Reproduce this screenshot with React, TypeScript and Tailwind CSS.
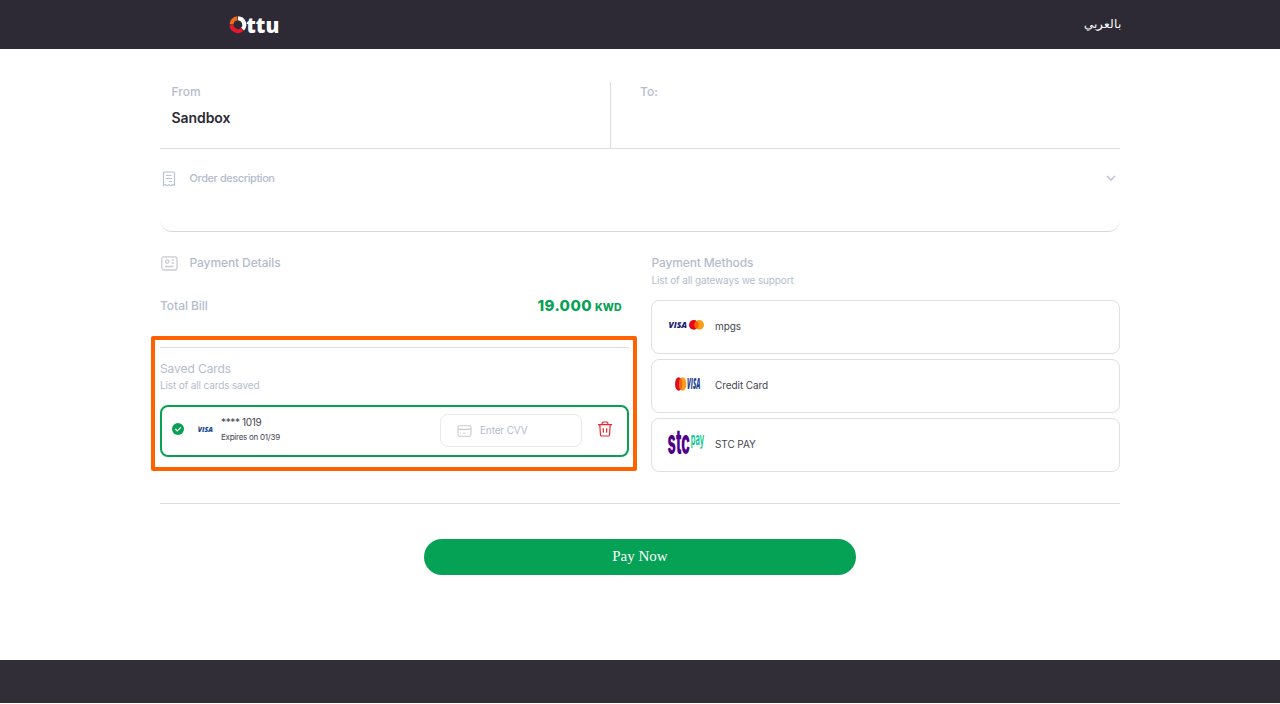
import React from "react";

const muted = "text-[#b5bccd]";

function OttuLogo() {
  return (
    <svg className="overflow-visible" width="51" height="20" viewBox="0 0 51 20" aria-label="Ottu">
      <g fill="none" strokeWidth="4">
        <path d="M9 3.3 A6.5 6.5 0 0 1 13.6 14.2" stroke="#ffffff" />
        <path d="M13.4 14.4 A6.5 6.5 0 0 1 2.5 10.1" stroke="#e8192f" />
        <path d="M2.5 9.4 A6.5 6.5 0 0 1 8.4 3.3" stroke="#f26a1b" />
      </g>
      <text x="17.3" y="17.9" fontFamily="Open Sans, sans-serif" fontWeight="800" fontSize="21" textLength="33" lengthAdjust="spacingAndGlyphs" fill="#ffffff">ttu</text>
    </svg>
  );
}

function ReceiptIcon() {
  return (
    <svg width="14" height="16" viewBox="0 0 14 16" fill="none" stroke="#b9c0d2" strokeWidth="1.2">
      <path d="M1.5 14.6 V2 Q1.5 1 2.5 1 H11.5 Q12.5 1 12.5 2 V14.6 L10.7 13.6 L8.8 14.8 L7 13.6 L5.2 14.8 L3.3 13.6 Z" />
      <path d="M4 4.5 H9.5 M4 7.5 H10 M7 10.5 H10" />
    </svg>
  );
}

function DetailsIcon() {
  return (
    <svg width="17" height="15" viewBox="0 0 17 15" fill="none" stroke="#cbccd1" strokeWidth="1.3">
      <rect x="0.8" y="0.8" width="15.2" height="13.2" rx="2" />
      <circle cx="6.3" cy="5.6" r="1.7" />
      <path d="M10.5 4.2 H13 M10.5 7 H13 M4 10.5 H12.6" />
    </svg>
  );
}

function MpgsLogo() {
  return (
    <svg className="overflow-visible" width="36" height="12" viewBox="0 0 36 12">
      <text x="0.5" y="9.2" fontFamily="Open Sans, sans-serif" fontWeight="800" fontStyle="italic" fontSize="9" textLength="18.5" lengthAdjust="spacingAndGlyphs" fill="#1a1f71">VISA</text>
      <circle cx="25.8" cy="5.9" r="4.8" fill="#eb001b" />
      <circle cx="31.2" cy="5.9" r="4.8" fill="#f79e1b" />
      <path d="M28.5 1.9 A4.8 4.8 0 0 1 28.5 9.9 A4.8 4.8 0 0 1 28.5 1.9" fill="#ff5f00" />
    </svg>
  );
}

function CreditLogo() {
  return (
    <svg className="overflow-visible" width="36" height="16" viewBox="0 0 36 16">
      <ellipse cx="10.6" cy="8" rx="3.6" ry="6.8" fill="#dc1024" />
      <ellipse cx="14.7" cy="8" rx="3.6" ry="6.8" fill="#f79e1b" />
      <ellipse cx="12.7" cy="8" rx="1.6" ry="5.7" fill="#f26312" />
      <text transform="translate(19 13.3) scale(1 2.5)" fontFamily="Open Sans, sans-serif" fontWeight="800" fontStyle="italic" fontSize="6.2" textLength="13.3" lengthAdjust="spacingAndGlyphs" fill="#1f3f8f">VISA</text>
    </svg>
  );
}

function StcLogo() {
  return (
    <svg className="overflow-visible" width="37" height="26" viewBox="0 0 37 26">
      <text transform="translate(-0.4 24.2) scale(1 2.3)" fontFamily="Inter, sans-serif" fontWeight="800" fontSize="14.6" textLength="22.3" lengthAdjust="spacingAndGlyphs" fill="#4f008c">stc</text>
      <text transform="translate(22.8 15.2) scale(1 2.3)" fontFamily="Inter, sans-serif" fontWeight="600" fontSize="7.4" textLength="13.4" lengthAdjust="spacingAndGlyphs" fill="#00c48c">pay</text>
    </svg>
  );
}

function Method({ logo, name }: { logo: React.ReactNode; name: string }) {
  return (
    <div className="flex h-[54px] items-center rounded-lg border border-[#dfdfe1] pb-0.5 pl-4">
      <div className="flex w-[47px] shrink-0 items-center pb-0.5">{logo}</div>
      <span className="text-[10px] leading-4 tracking-[-0.08px] text-[#45454f]">{name}</span>
    </div>
  );
}

export default function App() {
  return (
    <div className="flex h-[704px] flex-col bg-white font-['Inter',sans-serif]">
      <header className="flex h-[49px] shrink-0 items-center justify-between bg-[#2d2a35] pr-[159px] pl-[229px]">
        <OttuLogo />
        <a dir="rtl" className="pb-0.5 font-['Liberation_Serif',serif] text-[12.4px] leading-5 text-white">بالعربي</a>
      </header>

      <main className="mx-auto flex w-[960px] flex-1 flex-col pt-[33px]">
        <section className="flex h-[67px] border-b border-[#dddddf]">
          <div className="w-[451px] border-r border-[#dddddf] pt-0.5 pl-[11.5px]">
            <p className={`${muted} text-xs leading-4 font-medium`}>From</p>
            <p className="mt-2 text-sm leading-5 font-semibold tracking-[-0.08px] text-[#2d2a35]">Sandbox</p>
          </div>
          <p className={`${muted} pt-0.5 pl-[29px] text-xs leading-4 font-medium`}>To:</p>
        </section>

        <section className="flex h-[83px] items-start rounded-b-xl border-b border-[#d9d9dc] pt-[21px] pr-1">
          <div className="flex w-[29.5px] pt-px pl-0.5"><ReceiptIcon /></div>
          <p className={`${muted} text-[11px] leading-4 font-medium tracking-[-0.42px]`}>Order description</p>
          <svg className="mt-1 ml-auto" width="10" height="8" viewBox="0 0 10 8" fill="none" stroke="#c3c7d8" strokeWidth="1.6"><path d="M1 2 L5 6 L9 2" /></svg>
        </section>

        <section className="flex h-[272px] gap-[22px] border-b border-[#dddddf]">
          <div className="flex w-[469px] flex-col pt-[23px]">
            <div className="flex h-4 items-center">
              <div className="w-[29.5px] pl-px"><DetailsIcon /></div>
              <h2 className={`${muted} text-xs leading-4 font-medium tracking-[-0.1px]`}>Payment Details</h2>
            </div>
            <div className="mt-[25px] flex h-5 items-center justify-between pr-[7.5px]">
              <span className={`${muted} text-xs font-medium tracking-[-0.05px]`}>Total Bill</span>
              <span className="flex items-baseline gap-[3px] font-extrabold text-[#08a154]"><span className="text-[15px] leading-5 tracking-[0.42px]">19.000</span><span className="text-[10.5px]">KWD</span></span>
            </div>
            <div className="relative mt-[31px] border-t border-[#dddddf] pt-[13px]">
              <div className="pointer-events-none absolute -top-3 -left-[9px] h-[135px] w-[486px] rounded-xs border-4 border-[#ff6000]" />
              <h2 className={`${muted} text-xs leading-4 tracking-[-0.08px]`}>Saved Cards</h2>
              <p className={`${muted} text-[10px] leading-4 tracking-[-0.14px]`}>List of all cards saved</p>
              <div className="mt-3 flex h-[52px] items-center rounded-lg border-2 border-[#08a154] pr-[15px] pl-2.5">
                <svg className="mb-1" width="12" height="12" viewBox="0 0 12 12"><circle cx="6" cy="6" r="6" fill="#08a154" /><path d="M3.2 6 L5.3 8 L8.9 4.4" fill="none" stroke="white" strokeWidth="1.2" /></svg>
                <svg className="mb-1 ml-[13px] overflow-visible" width="16" height="8" viewBox="0 0 16 8"><text x="0.8" y="6.7" fontFamily="Open Sans, sans-serif" fontWeight="800" fontStyle="italic" fontSize="7.6" textLength="15" lengthAdjust="spacingAndGlyphs" fill="#0e4595">VISA</text><path d="M0.5 1 H2.4 L3 3.2 Z" fill="#f2ae14" /></svg>
                <div className="ml-2 pb-[3px] text-[#45454f]">
                  <p className="text-[10px] leading-[15px] tracking-[-0.35px]">**** 1019</p>
                  <p className="text-[8px] leading-[15px] tracking-[-0.25px]">Expires on 01/39</p>
                </div>
                <div className="mb-px ml-auto flex h-[33px] w-[142px] items-center rounded-lg border border-[#e9e9eb] pl-4">
                  <svg width="15" height="12" viewBox="0 0 15 12" fill="none" stroke="#c9c9cb" strokeWidth="1.1"><rect x="1" y="0.7" width="13" height="10.6" rx="1.8" /><path d="M1 4.4 H14 M3 8.3 H4 M6.2 8.3 H8.5" /></svg>
                  <span className={`${muted} ml-2 text-[10px] tracking-[-0.14px]`}>Enter CVV</span>
                </div>
                <svg className="mb-1 ml-4" width="14" height="16" viewBox="0 0 14 16" fill="none" stroke="#ee2630" strokeWidth="1.2"><path d="M0 3.7 H14 M4 3.5 Q4 1 5.6 1 H8.4 Q10 1 10 3.5 M1.8 3.7 L2.5 14 Q2.6 15 3.5 15 H10.5 Q11.4 15 11.5 14 L12.2 3.7 M5.2 7.3 L5.5 11.6 M8.8 7.3 L8.5 11.6" /></svg>
              </div>
            </div>
          </div>

          <div className="w-[469px] pt-[23px]">
            <h2 className={`${muted} pl-[0.5px] text-xs leading-4 font-medium tracking-[-0.14px]`}>Payment Methods</h2>
            <p className={`${muted} mt-px pl-[0.5px] text-[10px] leading-4 tracking-[-0.14px]`}>List of all gateways we support</p>
            <div className="mt-3 flex flex-col gap-[5px]">
              <Method logo={<MpgsLogo />} name="mpgs" />
              <Method logo={<CreditLogo />} name="Credit Card" />
              <Method logo={<StcLogo />} name="STC PAY" />
            </div>
          </div>
        </section>

        <button className="mx-auto mt-[35px] h-9 w-[432px] rounded-full bg-[#05a155] pb-0.5 font-['Liberation_Serif',serif] text-[15px] text-white">Pay Now</button>
      </main>

      <footer className="mb-px h-[43px] shrink-0 bg-[#312e38]" />
    </div>
  );
}
